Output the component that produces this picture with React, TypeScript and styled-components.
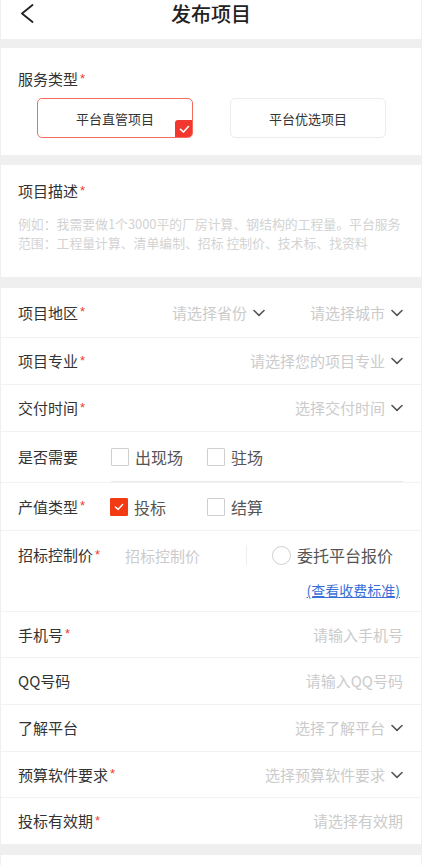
import React from "react";
import styled, { createGlobalStyle } from "styled-components";

const GlobalStyle = createGlobalStyle`
  html, body { margin: 0; padding: 0; background: #efefef; }
  body { font-family: "Noto Sans CJK SC", "Noto Sans", sans-serif; color: #333; }
  * { box-sizing: border-box; }
`;

const Page = styled.div`
  padding: 0 1px;
  min-height: 865px;
  display: flex;
  flex-direction: column;
`;

const Header = styled.header`
  height: 39px;
  background: #fff;
  display: grid;
  grid-template-columns: 1fr auto 1fr;
  align-items: start;
`;

const BackButton = styled.button`
  justify-self: start;
  background: none;
  border: 0;
  margin: 0;
  padding: 4px 0 0 19px;
  line-height: 0;
  cursor: pointer;
`;

const Title = styled.h1`
  margin: 0;
  padding-top: 1px;
  font-size: 20px;
  font-weight: 500;
  line-height: 25px;
  color: #222;
  letter-spacing: 0;
`;

const Section = styled.section<{ $gap: number; $height?: number }>`
  background: #fff;
  margin-top: ${(p) => p.$gap}px;
  ${(p) => (p.$height ? `height: ${p.$height}px;` : "")}
`;

const ServiceBody = styled.div`
  padding: 18px 0 0 17px;
`;

const Label = styled.span`
  font-size: 15px;
  line-height: 22px;
  color: #333;
  white-space: nowrap;
  display: inline-flex;
  align-items: center;
`;

const Star = styled.span`
  color: #f3392c;
  font-size: 13px;
  line-height: 1;
  margin-left: 2px;
  position: relative;
  top: -1px;
  font-family: "Liberation Sans", sans-serif;
`;

const ButtonRow = styled.div`
  display: flex;
  gap: 37px;
  padding-left: 19px;
  margin-top: 8px;
`;

const TypeButton = styled.button<{ $active?: boolean }>`
  position: relative;
  width: 156px;
  height: 40px;
  border-radius: 5px;
  border: 1px solid ${(p) => (p.$active ? "#f76a5e" : "#ececec")};
  background: #fff;
  font-family: inherit;
  font-size: 13px;
  color: #333;
  display: flex;
  align-items: center;
  justify-content: center;
  padding: 0;
  overflow: hidden;
`;

const Badge = styled.span`
  position: absolute;
  right: -1px;
  bottom: -1px;
  width: 18px;
  height: 18px;
  background: #f2372f;
  border-radius: 3px 0 5px 0;
  display: flex;
  align-items: center;
  justify-content: center;
`;

const DescBody = styled.div`
  padding: 13px 17px 0;
`;

const DescPlaceholder = styled.div`
  margin-top: 12px;
  font-size: 12.85px;
  line-height: 19px;
  color: #d3d3d3;
  white-space: nowrap;
`;

const Row = styled.div<{ $h: number; $last?: boolean }>`
  height: ${(p) => p.$h}px;
  display: flex;
  align-items: center;
  padding: 0 18px 0 17px;
  border-bottom: ${(p) => (p.$last ? "0" : "1px solid #f2f2f2")};
`;

const TallRow = styled.div`
  height: 81px;
  padding: 13px 21px 0 17px;
  border-bottom: 1px solid #f2f2f2;
  display: flex;
  flex-direction: column;
`;

const TopLine = styled.div`
  display: flex;
  align-items: center;
  height: 22px;
`;

const FixedLabel = styled(Label)<{ $w: number }>`
  width: ${(p) => p.$w}px;
  flex: none;
`;

const Placeholder = styled.span`
  font-size: 15px;
  line-height: 22px;
  color: #cbcbcb;
  white-space: nowrap;
`;

const SelectGroup = styled.div`
  margin-left: auto;
  display: flex;
  align-items: center;
  gap: 45px;
`;

const Select = styled.div`
  display: flex;
  align-items: center;
  gap: 6px;
`;

const InputArea = styled.div`
  width: 121px;
  flex: none;
`;

const VDivider = styled.span`
  width: 1px;
  height: 20px;
  background: #eee;
  flex: none;
`;

const Options = styled.div<{ $underline?: boolean }>`
  display: grid;
  grid-template-columns: 96px auto;
  align-items: center;
  align-self: stretch;
  flex: 1;
  ${(p) => (p.$underline ? "border-bottom: 1px solid #ebebeb;" : "")}
`;

const Option = styled.label`
  display: flex;
  align-items: center;
  gap: 6px;
  font-size: 16px;
  line-height: 22px;
  color: #555;
  white-space: nowrap;
`;

const Box = styled.span<{ $checked?: boolean }>`
  width: 18px;
  height: 18px;
  border: 1px solid ${(p) => (p.$checked ? "#f23a15" : "#cfcfcf")};
  background: ${(p) => (p.$checked ? "#f23a15" : "#fff")};
  border-radius: 1px;
  display: flex;
  align-items: center;
  justify-content: center;
  flex: none;
`;

const Radio = styled.span`
  width: 19px;
  height: 19px;
  border: 1px solid #cfcfcf;
  border-radius: 50%;
  flex: none;
`;

const RadioOption = styled(Option)`
  margin-left: 25px;
`;

const FeeLink = styled.a`
  align-self: flex-end;
  margin-top: 14px;
  font-size: 14px;
  line-height: 20px;
  color: #3a6fd8;
  text-decoration: underline;
  white-space: nowrap;
`;

const Right = styled.div`
  margin-left: auto;
  display: flex;
  align-items: center;
  gap: 6px;
`;

const Chevron = () => (
  <svg width="12" height="8" viewBox="0 0 12 8">
    <polyline points="1,1.5 6,6.3 11,1.5" fill="none" stroke="#555" strokeWidth="1.6" strokeLinecap="round" strokeLinejoin="round" />
  </svg>
);

const Check = ({ size = 11 }: { size?: number }) => (
  <svg width={size} height={size * 0.8} viewBox="0 0 12 10">
    <polyline points="1.5,5 4.8,8 10.5,1.8" fill="none" stroke="#fff" strokeWidth="1.8" strokeLinecap="round" strokeLinejoin="round" />
  </svg>
);

type SimpleRow = { label: string; req?: boolean; ph: string; chevron?: boolean; h: number; last?: boolean };

const lowerRows: SimpleRow[] = [
  { label: "手机号", req: true, ph: "请输入手机号", h: 46 },
  { label: "QQ号码", ph: "请输入QQ号码", h: 47 },
  { label: "了解平台", ph: "选择了解平台", chevron: true, h: 47 },
  { label: "预算软件要求", req: true, ph: "选择预算软件要求", chevron: true, h: 46 },
  { label: "投标有效期", req: true, ph: "请选择有效期", h: 46, last: true },
];

const FieldLabel = ({ text, req }: { text: string; req?: boolean }) => (
  <Label>
    {text}
    {req && <Star>*</Star>}
  </Label>
);

export default function App() {
  return (
    <>
      <GlobalStyle />
      <Page>
        <Header>
          <BackButton aria-label="返回">
            <svg width="14" height="20" viewBox="0 0 14 20">
              <polyline points="12.5,1 2,9.5 12.5,18" fill="none" stroke="#222" strokeWidth="1.8" strokeLinecap="round" strokeLinejoin="round" />
            </svg>
          </BackButton>
          <Title>发布项目</Title>
          <span />
        </Header>

        <Section $gap={9} $height={107}>
          <ServiceBody>
            <FieldLabel text="服务类型" req />
            <ButtonRow>
              <TypeButton $active>
                平台直管项目
                <Badge>
                  <Check size={11} />
                </Badge>
              </TypeButton>
              <TypeButton>平台优选项目</TypeButton>
            </ButtonRow>
          </ServiceBody>
        </Section>

        <Section $gap={10} $height={112}>
          <DescBody>
            <FieldLabel text="项目描述" req />
            <DescPlaceholder>
              例如：我需要做1个3000平的厂房计算、钢结构的工程量。平台服务
              <br />
              范围：工程量计算、清单编制、招标 控制价、技术标、找资料
            </DescPlaceholder>
          </DescBody>
        </Section>

        <Section $gap={11}>
          <Row $h={50}>
            <FieldLabel text="项目地区" req />
            <SelectGroup>
              <Select>
                <Placeholder>请选择省份</Placeholder>
                <Chevron />
              </Select>
              <Select>
                <Placeholder>请选择城市</Placeholder>
                <Chevron />
              </Select>
            </SelectGroup>
          </Row>
          <Row $h={47}>
            <FieldLabel text="项目专业" req />
            <Right>
              <Placeholder>请选择您的项目专业</Placeholder>
              <Chevron />
            </Right>
          </Row>
          <Row $h={47}>
            <FieldLabel text="交付时间" req />
            <Right>
              <Placeholder>选择交付时间</Placeholder>
              <Chevron />
            </Right>
          </Row>
          <Row $h={51}>
            <FixedLabel $w={93}>是否需要</FixedLabel>
            <Options $underline>
              <Option>
                <Box />
                出现场
              </Option>
              <Option>
                <Box />
                驻场
              </Option>
            </Options>
          </Row>
          <Row $h={48}>
            <FixedLabel $w={92}>
              产值类型<Star>*</Star>
            </FixedLabel>
            <Options>
              <Option>
                <Box $checked>
                  <Check size={10} />
                </Box>
                投标
              </Option>
              <Option style={{ marginLeft: 1 }}>
                <Box />
                结算
              </Option>
            </Options>
          </Row>
          <TallRow>
            <TopLine>
              <FixedLabel $w={107}>
                招标控制价<Star>*</Star>
              </FixedLabel>
              <InputArea>
                <Placeholder>招标控制价</Placeholder>
              </InputArea>
              <VDivider />
              <RadioOption>
                <Radio />
                委托平台报价
              </RadioOption>
            </TopLine>
            <FeeLink href="#">(查看收费标准)</FeeLink>
          </TallRow>
          {lowerRows.map((r) => (
            <Row key={r.label} $h={r.h} $last={r.last}>
              <FieldLabel text={r.label} req={r.req} />
              <Right>
                <Placeholder>{r.ph}</Placeholder>
                {r.chevron && <Chevron />}
              </Right>
            </Row>
          ))}
        </Section>

        <Section $gap={11} $height={40} />
      </Page>
    </>
  );
}
